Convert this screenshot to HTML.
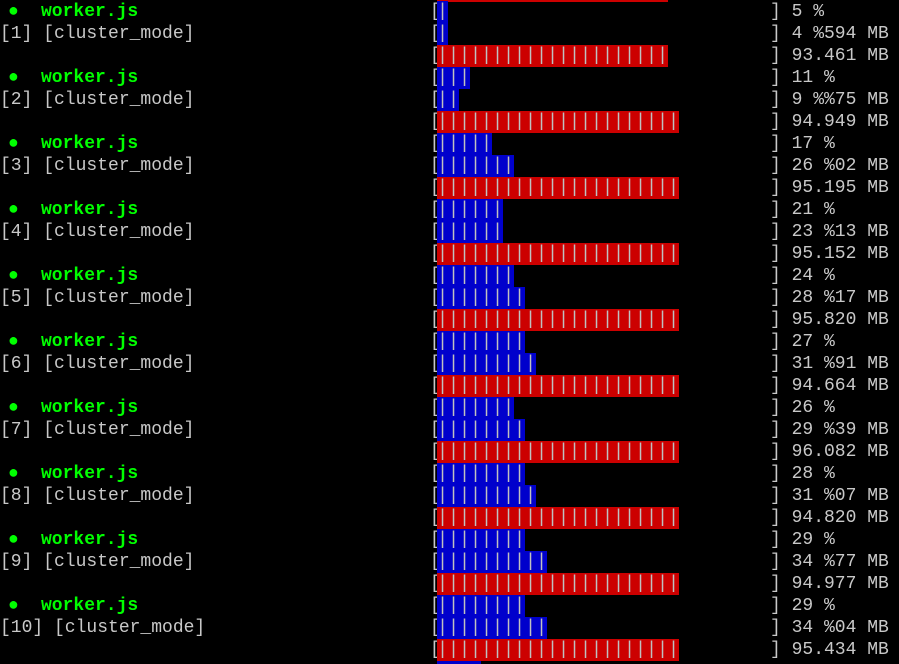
<!DOCTYPE html>
<html><head><meta charset="utf-8"><style>
html,body{margin:0;padding:0;background:#000;width:899px;height:664px;overflow:hidden;position:relative}
.r{position:absolute;left:0;height:22px;width:899px;font-family:"Liberation Mono",monospace;font-size:18px;letter-spacing:0;line-height:22px;color:#c8c8c8;white-space:pre}
.r span{position:absolute;top:0}
.g{color:#00ff00;font-weight:bold}
.bl{left:430px}
.b{left:437px;height:22px;color:#c0c0c0;letter-spacing:0;}
.b i{display:inline-block;width:11px;text-align:center;font-style:normal}
.u{background:#0000cc}
.d{background:#cc0000}
.rv{left:770px}
</style></head><body>
<div class="r" style="top:-20px"><span class="b d" style="width:231px"></span></div>

<div class="r" style="top:1px"><span class="g" style="left:8px">●</span><span class="g" style="left:41px">worker.js</span><span class="bl">[</span><span class="b u" style="width:11px"><i>|</i></span><span class="rv">] 5 %</span></div>
<div class="r" style="top:23px"><span style="left:0">[1] [cluster_mode]</span><span class="bl">[</span><span class="b u" style="width:11px"><i>|</i></span><span class="rv">] 4 %594 MB</span></div>
<div class="r" style="top:45px"><span class="bl">[</span><span class="b d" style="width:231px"><i>|</i><i>|</i><i>|</i><i>|</i><i>|</i><i>|</i><i>|</i><i>|</i><i>|</i><i>|</i><i>|</i><i>|</i><i>|</i><i>|</i><i>|</i><i>|</i><i>|</i><i>|</i><i>|</i><i>|</i><i>|</i></span><span class="rv">] 93.461 MB</span></div>

<div class="r" style="top:67px"><span class="g" style="left:8px">●</span><span class="g" style="left:41px">worker.js</span><span class="bl">[</span><span class="b u" style="width:33px"><i>|</i><i>|</i><i>|</i></span><span class="rv">] 11 %</span></div>
<div class="r" style="top:89px"><span>[2] [cluster_mode]</span><span class="bl">[</span><span class="b u" style="width:22px"><i>|</i><i>|</i></span><span class="rv">] 9 %%75 MB</span></div>
<div class="r" style="top:111px"><span class="bl">[</span><span class="b d" style="width:242px"><i>|</i><i>|</i><i>|</i><i>|</i><i>|</i><i>|</i><i>|</i><i>|</i><i>|</i><i>|</i><i>|</i><i>|</i><i>|</i><i>|</i><i>|</i><i>|</i><i>|</i><i>|</i><i>|</i><i>|</i><i>|</i><i>|</i></span><span class="rv">] 94.949 MB</span></div>

<div class="r" style="top:133px"><span class="g" style="left:8px">●</span><span class="g" style="left:41px">worker.js</span><span class="bl">[</span><span class="b u" style="width:55px"><i>|</i><i>|</i><i>|</i><i>|</i><i>|</i></span><span class="rv">] 17 %</span></div>
<div class="r" style="top:155px"><span>[3] [cluster_mode]</span><span class="bl">[</span><span class="b u" style="width:77px"><i>|</i><i>|</i><i>|</i><i>|</i><i>|</i><i>|</i><i>|</i></span><span class="rv">] 26 %02 MB</span></div>
<div class="r" style="top:177px"><span class="bl">[</span><span class="b d" style="width:242px"><i>|</i><i>|</i><i>|</i><i>|</i><i>|</i><i>|</i><i>|</i><i>|</i><i>|</i><i>|</i><i>|</i><i>|</i><i>|</i><i>|</i><i>|</i><i>|</i><i>|</i><i>|</i><i>|</i><i>|</i><i>|</i><i>|</i></span><span class="rv">] 95.195 MB</span></div>

<div class="r" style="top:199px"><span class="g" style="left:8px">●</span><span class="g" style="left:41px">worker.js</span><span class="bl">[</span><span class="b u" style="width:66px"><i>|</i><i>|</i><i>|</i><i>|</i><i>|</i><i>|</i></span><span class="rv">] 21 %</span></div>
<div class="r" style="top:221px"><span>[4] [cluster_mode]</span><span class="bl">[</span><span class="b u" style="width:66px"><i>|</i><i>|</i><i>|</i><i>|</i><i>|</i><i>|</i></span><span class="rv">] 23 %13 MB</span></div>
<div class="r" style="top:243px"><span class="bl">[</span><span class="b d" style="width:242px"><i>|</i><i>|</i><i>|</i><i>|</i><i>|</i><i>|</i><i>|</i><i>|</i><i>|</i><i>|</i><i>|</i><i>|</i><i>|</i><i>|</i><i>|</i><i>|</i><i>|</i><i>|</i><i>|</i><i>|</i><i>|</i><i>|</i></span><span class="rv">] 95.152 MB</span></div>

<div class="r" style="top:265px"><span class="g" style="left:8px">●</span><span class="g" style="left:41px">worker.js</span><span class="bl">[</span><span class="b u" style="width:77px"><i>|</i><i>|</i><i>|</i><i>|</i><i>|</i><i>|</i><i>|</i></span><span class="rv">] 24 %</span></div>
<div class="r" style="top:287px"><span>[5] [cluster_mode]</span><span class="bl">[</span><span class="b u" style="width:88px"><i>|</i><i>|</i><i>|</i><i>|</i><i>|</i><i>|</i><i>|</i><i>|</i></span><span class="rv">] 28 %17 MB</span></div>
<div class="r" style="top:309px"><span class="bl">[</span><span class="b d" style="width:242px"><i>|</i><i>|</i><i>|</i><i>|</i><i>|</i><i>|</i><i>|</i><i>|</i><i>|</i><i>|</i><i>|</i><i>|</i><i>|</i><i>|</i><i>|</i><i>|</i><i>|</i><i>|</i><i>|</i><i>|</i><i>|</i><i>|</i></span><span class="rv">] 95.820 MB</span></div>

<div class="r" style="top:331px"><span class="g" style="left:8px">●</span><span class="g" style="left:41px">worker.js</span><span class="bl">[</span><span class="b u" style="width:88px"><i>|</i><i>|</i><i>|</i><i>|</i><i>|</i><i>|</i><i>|</i><i>|</i></span><span class="rv">] 27 %</span></div>
<div class="r" style="top:353px"><span>[6] [cluster_mode]</span><span class="bl">[</span><span class="b u" style="width:99px"><i>|</i><i>|</i><i>|</i><i>|</i><i>|</i><i>|</i><i>|</i><i>|</i><i>|</i></span><span class="rv">] 31 %91 MB</span></div>
<div class="r" style="top:375px"><span class="bl">[</span><span class="b d" style="width:242px"><i>|</i><i>|</i><i>|</i><i>|</i><i>|</i><i>|</i><i>|</i><i>|</i><i>|</i><i>|</i><i>|</i><i>|</i><i>|</i><i>|</i><i>|</i><i>|</i><i>|</i><i>|</i><i>|</i><i>|</i><i>|</i><i>|</i></span><span class="rv">] 94.664 MB</span></div>

<div class="r" style="top:397px"><span class="g" style="left:8px">●</span><span class="g" style="left:41px">worker.js</span><span class="bl">[</span><span class="b u" style="width:77px"><i>|</i><i>|</i><i>|</i><i>|</i><i>|</i><i>|</i><i>|</i></span><span class="rv">] 26 %</span></div>
<div class="r" style="top:419px"><span>[7] [cluster_mode]</span><span class="bl">[</span><span class="b u" style="width:88px"><i>|</i><i>|</i><i>|</i><i>|</i><i>|</i><i>|</i><i>|</i><i>|</i></span><span class="rv">] 29 %39 MB</span></div>
<div class="r" style="top:441px"><span class="bl">[</span><span class="b d" style="width:242px"><i>|</i><i>|</i><i>|</i><i>|</i><i>|</i><i>|</i><i>|</i><i>|</i><i>|</i><i>|</i><i>|</i><i>|</i><i>|</i><i>|</i><i>|</i><i>|</i><i>|</i><i>|</i><i>|</i><i>|</i><i>|</i><i>|</i></span><span class="rv">] 96.082 MB</span></div>

<div class="r" style="top:463px"><span class="g" style="left:8px">●</span><span class="g" style="left:41px">worker.js</span><span class="bl">[</span><span class="b u" style="width:88px"><i>|</i><i>|</i><i>|</i><i>|</i><i>|</i><i>|</i><i>|</i><i>|</i></span><span class="rv">] 28 %</span></div>
<div class="r" style="top:485px"><span>[8] [cluster_mode]</span><span class="bl">[</span><span class="b u" style="width:99px"><i>|</i><i>|</i><i>|</i><i>|</i><i>|</i><i>|</i><i>|</i><i>|</i><i>|</i></span><span class="rv">] 31 %07 MB</span></div>
<div class="r" style="top:507px"><span class="bl">[</span><span class="b d" style="width:242px"><i>|</i><i>|</i><i>|</i><i>|</i><i>|</i><i>|</i><i>|</i><i>|</i><i>|</i><i>|</i><i>|</i><i>|</i><i>|</i><i>|</i><i>|</i><i>|</i><i>|</i><i>|</i><i>|</i><i>|</i><i>|</i><i>|</i></span><span class="rv">] 94.820 MB</span></div>

<div class="r" style="top:529px"><span class="g" style="left:8px">●</span><span class="g" style="left:41px">worker.js</span><span class="bl">[</span><span class="b u" style="width:88px"><i>|</i><i>|</i><i>|</i><i>|</i><i>|</i><i>|</i><i>|</i><i>|</i></span><span class="rv">] 29 %</span></div>
<div class="r" style="top:551px"><span>[9] [cluster_mode]</span><span class="bl">[</span><span class="b u" style="width:110px"><i>|</i><i>|</i><i>|</i><i>|</i><i>|</i><i>|</i><i>|</i><i>|</i><i>|</i><i>|</i></span><span class="rv">] 34 %77 MB</span></div>
<div class="r" style="top:573px"><span class="bl">[</span><span class="b d" style="width:242px"><i>|</i><i>|</i><i>|</i><i>|</i><i>|</i><i>|</i><i>|</i><i>|</i><i>|</i><i>|</i><i>|</i><i>|</i><i>|</i><i>|</i><i>|</i><i>|</i><i>|</i><i>|</i><i>|</i><i>|</i><i>|</i><i>|</i></span><span class="rv">] 94.977 MB</span></div>

<div class="r" style="top:595px"><span class="g" style="left:8px">●</span><span class="g" style="left:41px">worker.js</span><span class="bl">[</span><span class="b u" style="width:88px"><i>|</i><i>|</i><i>|</i><i>|</i><i>|</i><i>|</i><i>|</i><i>|</i></span><span class="rv">] 29 %</span></div>
<div class="r" style="top:617px"><span>[10] [cluster_mode]</span><span class="bl">[</span><span class="b u" style="width:110px"><i>|</i><i>|</i><i>|</i><i>|</i><i>|</i><i>|</i><i>|</i><i>|</i><i>|</i><i>|</i></span><span class="rv">] 34 %04 MB</span></div>
<div class="r" style="top:639px"><span class="bl">[</span><span class="b d" style="width:242px"><i>|</i><i>|</i><i>|</i><i>|</i><i>|</i><i>|</i><i>|</i><i>|</i><i>|</i><i>|</i><i>|</i><i>|</i><i>|</i><i>|</i><i>|</i><i>|</i><i>|</i><i>|</i><i>|</i><i>|</i><i>|</i><i>|</i></span><span class="rv">] 95.434 MB</span></div>
<div class="r" style="top:661px"><span class="b u" style="width:44px"></span></div>
</body></html>
